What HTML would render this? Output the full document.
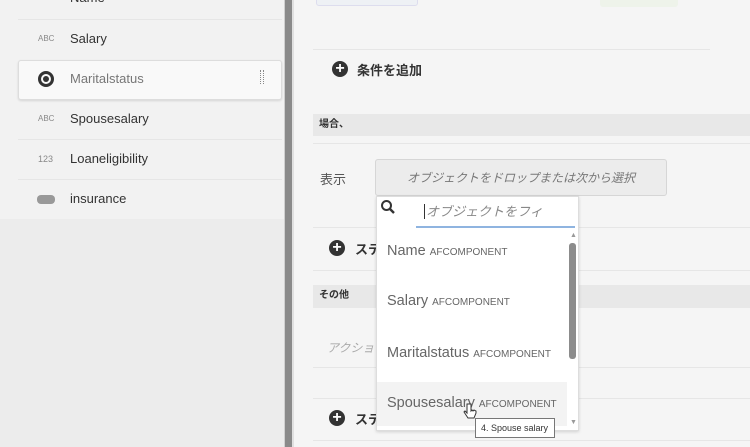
<!DOCTYPE html>
<html><head><meta charset="utf-8"><style>
*{margin:0;padding:0;box-sizing:border-box}
body{width:750px;height:447px;overflow:hidden;position:relative;background:#f5f5f5;font-family:"Liberation Sans","Noto Sans CJK JP",sans-serif;color:#333}
.abs{position:absolute}
.left{left:0;top:0;width:284px;height:447px;background:#ececec}
.list{left:0;top:0;width:284px;height:219px;background:#f2f2f2}
.sep{height:1px;background:#e6e6e6}
.item{position:absolute;left:0;width:284px;height:40px;font-size:13px;color:#333}
.item .t{position:absolute;left:70px;top:12px}
.item .ic{position:absolute;left:38px;top:15px;font-size:8px;color:#888}
.band{left:313px;width:437px;background:#e8e8e8;font-size:10px;font-weight:bold;padding-left:6px;color:#333}
.plus{width:16px;height:16px;border-radius:50%;background:#333;color:#fff;font-size:16px;line-height:15px;text-align:center;font-weight:bold}
.opt{position:absolute;left:10px;font-size:14.5px;color:#666}
.opt small{font-size:10px;color:#666}
</style></head><body>
<div class="abs left"></div>
<div class="abs list"></div>
<div class="abs sep" style="left:18px;top:19px;width:264px"></div>
<div class="abs sep" style="left:18px;top:139px;width:264px"></div>
<div class="abs sep" style="left:18px;top:179px;width:264px"></div>
<div class="item" style="top:-22px"><span class="ic">ABC</span><span class="t">Name</span></div>
<div class="item" style="top:19px"><span class="ic">ABC</span><span class="t">Salary</span></div>
<div class="abs" style="left:18px;top:60px;width:264px;height:40px;background:#f9f9f9;border:1px solid #ddd;border-radius:3px;box-shadow:0 1px 2px rgba(0,0,0,.12)"></div>
<div class="abs" style="left:38px;top:71px;width:16px;height:16px;border-radius:50%;border:3px solid #333"><div style="width:6px;height:6px;margin:2px;border-radius:50%;background:#333"></div></div>
<div class="abs" style="left:70px;top:71px;font-size:13px;color:#777">Maritalstatus</div>
<div class="abs" style="left:260px;top:70px;width:4px;height:14px;border-left:1px dotted #888;border-right:1px dotted #888"></div>
<div class="item" style="top:99px"><span class="ic">ABC</span><span class="t">Spousesalary</span></div>
<div class="item" style="top:139px"><span class="ic" style="font-size:9px">123</span><span class="t">Loaneligibility</span></div>
<div class="item" style="top:179px"><span class="abs" style="left:37px;top:16px;width:18px;height:9px;border-radius:4px;background:#999"></span><span class="t">insurance</span></div>
<div class="abs" style="left:284px;top:0;width:1px;height:447px;background:#d0d0d0"></div>
<div class="abs" style="left:285px;top:0;width:7px;height:447px;background:#8a8a8a"></div>
<div class="abs" style="left:292px;top:0;width:2px;height:447px;background:#e0e0e0"></div>

<div class="abs" style="left:316px;top:-4px;width:102px;height:10px;background:#eef1f5;border:1px solid #dde;border-radius:3px"></div>
<div class="abs" style="left:600px;top:-4px;width:78px;height:11px;background:#eef3ea;border-radius:3px"></div>
<div class="abs sep" style="left:313px;top:49px;width:397px"></div>
<div class="abs plus" style="left:332px;top:61px">+</div>
<div class="abs" style="left:357px;top:60px;font-size:13px;font-weight:bold">条件を追加</div>
<div class="abs band" style="top:114px;height:22px;line-height:22px">場合、</div>
<div class="abs sep" style="left:313px;top:143px;width:437px"></div>
<div class="abs" style="left:320px;top:169px;font-size:13px;color:#555">表示</div>
<div class="abs" style="left:375px;top:159px;width:292px;height:37px;background:#ececec;border:1px solid #d6d6d6;border-radius:3px;font-size:12px;font-style:italic;color:#777;text-align:center;line-height:36px">オブジェクトをドロップまたは次から選択</div>
<div class="abs sep" style="left:313px;top:227px;width:437px"></div>
<div class="abs plus" style="left:329px;top:240px">+</div>
<div class="abs" style="left:355px;top:239px;font-size:13px;font-weight:bold">ステ</div>
<div class="abs sep" style="left:313px;top:270px;width:437px"></div>
<div class="abs band" style="top:285px;height:23px;line-height:22px">その他</div>
<div class="abs" style="left:327px;top:339px;font-size:12px;font-style:italic;color:#aaa">アクショ</div>
<div class="abs sep" style="left:313px;top:367px;width:437px"></div>
<div class="abs sep" style="left:313px;top:398px;width:437px"></div>
<div class="abs plus" style="left:329px;top:410px">+</div>
<div class="abs" style="left:355px;top:409px;font-size:13px;font-weight:bold">ステ</div>
<div class="abs sep" style="left:313px;top:440px;width:437px"></div>

<div class="abs" style="left:376px;top:196px;width:203px;height:235px;background:#fff;border:1px solid #ddd;box-shadow:0 1px 3px rgba(0,0,0,.15)">
  <svg class="abs" style="left:3px;top:2px" width="16" height="16" viewBox="0 0 16 16"><circle cx="6.5" cy="6.5" r="4.5" fill="none" stroke="#333" stroke-width="2"/><path d="M10 10l4 4" stroke="#333" stroke-width="2.4"/></svg>
  <div class="abs" style="left:39px;top:0;width:159px;height:31px;border-bottom:2px solid #8fb4e0;font-size:13px;font-style:italic;color:#888;line-height:30px;padding-left:8px"><span style="border-left:1px solid #333;padding-left:1px">オブジェクトをフィ</span></div>
  <div class="abs" style="left:0;top:185px;width:190px;height:44px;background:#f3f3f3"></div>
  <div class="opt" style="top:46px">Name <small>AFCOMPONENT</small></div>
  <div class="opt" style="top:96px">Salary <small>AFCOMPONENT</small></div>
  <div class="opt" style="top:148px">Maritalstatus <small>AFCOMPONENT</small></div>
  <div class="opt" style="top:198px">Spousesalary <small>AFCOMPONENT</small></div>
  <div class="abs" style="left:193px;top:35px;font-size:7px;color:#999">▲</div>
  <div class="abs" style="left:192px;top:46px;width:7px;height:116px;background:#8c8c8c;border-radius:3px"></div>
  <div class="abs" style="left:193px;top:222px;font-size:7px;color:#999">▼</div>
</div>
<div class="abs" style="left:475px;top:418px;width:80px;height:20px;background:#fff;border:1px solid #777;font-size:9px;line-height:18px;padding-left:5px;color:#333">4. Spouse salary</div>
<svg class="abs" style="left:463px;top:403px" width="14" height="18" viewBox="0 0 14 18"><path d="M4 1v9l-2-2-1 1 4 6h6l2-5V8l-2-1-1 1-1-1-1 1V1z" fill="#fff" stroke="#333" stroke-width="1"/></svg>
</body></html>
